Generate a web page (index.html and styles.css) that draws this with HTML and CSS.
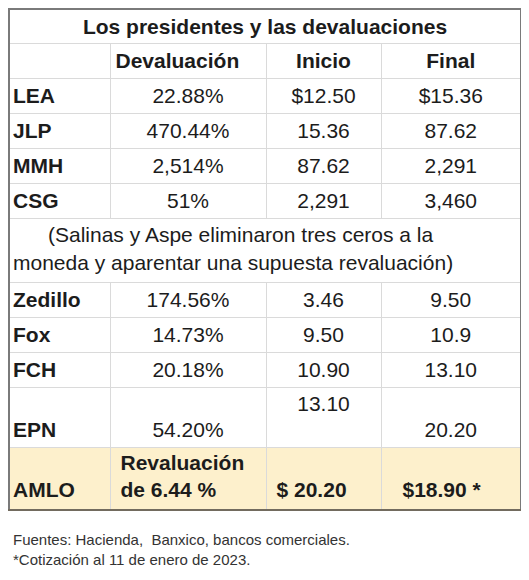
FILE: index.html
```html
<!DOCTYPE html>
<html lang="es">
<head>
  <meta charset="UTF-8" />
  <meta name="viewport" content="width=device-width, initial-scale=1.0"/>
  <title>Los presidentes y las devaluaciones</title>
  <link rel="stylesheet" href="styles.css">
</head>
<body>
  <table class="devals">
    <colgroup>
      <col class="c-name">
      <col class="c-dev">
      <col class="c-ini">
      <col class="c-fin">
    </colgroup>
    <thead>
      <tr class="title-row">
        <th colspan="4">Los presidentes y las devaluaciones</th>
      </tr>
      <tr class="head-row">
        <th></th>
        <th class="dev-head">Devaluación</th>
        <th>Inicio</th>
        <th>Final</th>
      </tr>
    </thead>
    <tbody>
      <tr><td class="name">LEA</td><td>22.88%</td><td>$12.50</td><td>$15.36</td></tr>
      <tr><td class="name">JLP</td><td>470.44%</td><td>15.36</td><td>87.62</td></tr>
      <tr><td class="name">MMH</td><td>2,514%</td><td>87.62</td><td>2,291</td></tr>
      <tr><td class="name">CSG</td><td>51%</td><td>2,291</td><td>3,460</td></tr>
      <tr class="note-row">
        <td colspan="4">(Salinas y Aspe eliminaron tres ceros a la<br>moneda y aparentar una supuesta revaluación)</td>
      </tr>
      <tr><td class="name">Zedillo</td><td>174.56%</td><td>3.46</td><td>9.50</td></tr>
      <tr><td class="name">Fox</td><td>14.73%</td><td>9.50</td><td>10.9</td></tr>
      <tr><td class="name">FCH</td><td>20.18%</td><td>10.90</td><td>13.10</td></tr>
      <tr class="tall-row">
        <td class="name">EPN</td><td>54.20%</td><td class="top">13.10</td><td>20.20</td>
      </tr>
      <tr class="amlo-row">
        <td class="name">AMLO</td>
        <td class="left">Revaluación<br>de 6.44 %</td>
        <td class="left">$ 20.20</td>
        <td class="left wide">$18.90 *</td>
      </tr>
    </tbody>
  </table>

  <div class="sources">
    <p>Fuentes: Hacienda,&nbsp; Banxico, bancos comerciales.</p>
    <p>*Cotización al 11 de enero de 2023.</p>
  </div>
</body>
</html>
```

FILE: styles.css
```css
body { margin: 8px; font-family: "Liberation Sans", Arial, sans-serif; color: #1c1c1c; background: #fff; }
.devals { border-collapse: collapse; border: 2px solid #7a7a7a; width: 514px; table-layout: fixed; font-size: 21px; }
.c-name { width: 101px; }
.c-dev { width: 156px; }
.c-ini { width: 115px; }
.c-fin { width: 140px; }
.devals th, .devals td { border: 1px solid #dadada; padding: 0 3px; text-align: center; vertical-align: middle; line-height: 24px; }
.devals tr { height: 35px; }
.devals .title-row { height: 34px; }
.devals .title-row th { font-weight: bold; padding-top: 2px; }
.devals .head-row th { font-weight: bold; }
.devals th.dev-head { text-align: left; padding-left: 5px; }
.devals td.name { text-align: left; font-weight: bold; padding-left: 3px; }
.devals .note-row { height: 64px; }
.devals .note-row td { text-align: left; text-indent: 35px; line-height: 28px; padding: 2px 3px 4px; }
.devals .tall-row { height: 60px; }
.devals .tall-row td { vertical-align: bottom; padding-bottom: 5px; }
.devals .tall-row td.top { vertical-align: top; padding-top: 4px; }
.devals .amlo-row { height: 63px; background: #fdf0cc; }
.devals .amlo-row td { font-weight: bold; vertical-align: bottom; padding-bottom: 6px; line-height: 27px; }
.devals .amlo-row td { border-bottom: 2px solid #726b5e; }
.devals .amlo-row td.left { text-align: left; padding-left: 10px; }
.devals .amlo-row td.wide { padding-left: 21px; }
.sources { margin-top: 19px; padding-left: 5px; font-size: 15px; color: #333; }
.sources p { margin: 0; line-height: 20px; }
```
